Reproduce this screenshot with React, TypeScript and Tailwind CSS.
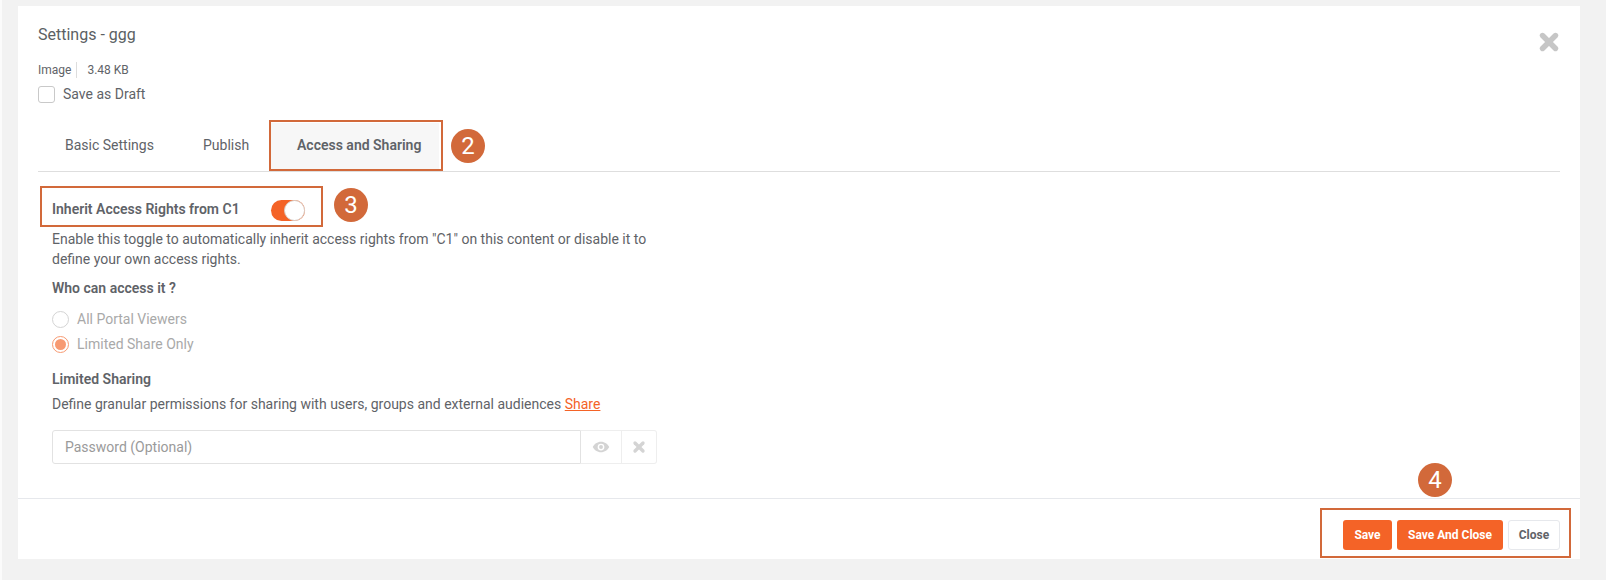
import { X } from "lucide-react";

const badgeClass =
  "absolute flex items-center justify-center size-[34px] rounded-full bg-[#d2693a] text-white text-[24px] leading-none";
const boxClass = "absolute border-2 border-[#d2693a] pointer-events-none";

const App = () => {
  return (
    <div className="relative h-[580px] w-[1606px] overflow-hidden border-l-2 border-l-[#fbfbfb] bg-[#f2f2f2] font-['Roboto',sans-serif] text-[14px] text-[#5f6368]">
      <div className="ml-4 pt-[6px]">
        <div className="flex h-[553px] w-[1562px] flex-col bg-white">
          {/* body */}
          <div className="relative flex-1 px-5 pt-[19px]">
            <div className="h-5 text-[16px] leading-5 text-[#5b5f63]">Settings - ggg</div>
            <div className="mt-[17px] flex h-4 items-center text-[12px] leading-4">
              <span className="border-r border-r-[#dddddd] pr-[5px]">Image</span>
              <span className="pl-[10px]">3.48 KB</span>
            </div>
            <div className="mt-[8px] flex h-[17px] items-center">
              <span className="size-[17px] rounded-[3px] border border-[#c9c9c9] bg-white" />
              <span className="ml-2 text-[14px]">Save as Draft</span>
            </div>

            {/* tabs */}
            <div className="mt-[20px] flex h-[49px] border-b border-b-[#dedede]">
              <div className="flex w-[142px] items-center pb-[4px] pl-[27px]">Basic Settings</div>
              <div className="flex w-[91px] items-center pb-[4px] pl-[23px]">Publish</div>
              <div className="flex w-[168px] items-center bg-[#f7f7f7] pb-[4px] pl-[26px] font-semibold">Access and Sharing</div>
            </div>

            <div className="pl-[14px]">
              <div className="mt-[27px] flex h-[22px] w-[253px] items-center justify-between font-semibold">
                <span className="pb-[2px]">Inherit Access Rights from C1</span>
                <span className="relative h-[21px] w-[34px] rounded-full bg-[#f46327]">
                  <span className="absolute right-0 top-0 size-[21px] rounded-full border border-[#d9cfc9] bg-white" />
                </span>
              </div>

              <p className="mt-[8px] w-[600px] leading-5">
                Enable this toggle to automatically inherit access rights from "C1" on this content or disable it to define your own access rights.
              </p>

              <div className="mt-[9px] leading-5 font-semibold">Who can access it ?</div>

              <div className="mt-[11px] flex h-5 items-center text-[#a9a9a9]">
                <span className="size-[17px] rounded-full border border-[#d4d4d4] bg-white" />
                <span className="ml-2">All Portal Viewers</span>
              </div>
              <div className="mt-[5px] flex h-5 items-center text-[#a9a9a9]">
                <span className="flex size-[17px] items-center justify-center rounded-full border border-[#f79a72] bg-white">
                  <span className="size-[11px] rounded-full bg-[#f79a72]" />
                </span>
                <span className="ml-2">Limited Share Only</span>
              </div>

              <div className="mt-[15px] leading-5 font-semibold">Limited Sharing</div>
              <div className="mt-[5px] leading-5">
                Define granular permissions for sharing with users, groups and external audiences{" "}
                <span className="text-[#f46327] underline">Share</span>
              </div>

              <div className="mt-4 flex h-[34px] w-[605px]">
                <div className="flex w-[529px] items-center rounded-l-[3px] border border-[#e2e2e2] pl-3 text-[#9a9a9a]">
                  Password (Optional)
                </div>
                <div className="flex w-[41px] items-center justify-center border-y border-r border-[#eeeeee]">
                  <svg viewBox="0 0 24 24" className="size-[18px]" fill="#d4d4d4">
                    <path
                      fillRule="evenodd"
                      d="M12 5C7 5 2.9 8.1 1 12c1.900 3.900 6 7 11 7s9.100-3.100 11-7c-1.900-3.900-6-7-11-7zm0 11.500a4.500 4.500 0 1 1 0-9 4.500 4.500 0 0 1 0 9z"
                    />
                    <circle cx="12" cy="12" r="2.600" />
                  </svg>
                </div>
                <div className="flex w-[35px] items-center justify-center rounded-r-[3px] border-y border-r border-[#eeeeee]">
                  <X size={16} strokeWidth={5} className="text-[#d4d4d4]" />
                </div>
              </div>
            </div>

            <X size={26} strokeWidth={5} className="absolute right-[18px] top-[23px] text-[#c6c6c6]" />
          </div>

          {/* footer */}
          <div className="flex h-[61px] items-center justify-end gap-[5px] border-t border-t-[#e6e8ec] pr-5 pt-[12px] text-[12px] font-bold">
            <button className="h-[30px] w-[49px] rounded-[3px] bg-[#f46327] text-white">Save</button>
            <button className="h-[30px] w-[106px] rounded-[3px] bg-[#f46327] text-white">Save And Close</button>
            <button className="h-[30px] w-[52px] rounded-[3px] border border-[#e6e8ec] bg-white text-[#5f6368]">Close</button>
          </div>
        </div>
      </div>

      {/* annotations */}
      <div className={`${boxClass} left-[267px] top-[120px] h-[51px] w-[174px]`} />
      <div className={`${badgeClass} left-[449px] top-[129px]`}>2</div>
      <div className={`${boxClass} left-[38px] top-[186px] h-[41px] w-[283px]`} />
      <div className={`${badgeClass} left-[332px] top-[188px]`}>3</div>
      <div className={`${badgeClass} left-[1416px] top-[463px]`}>4</div>
      <div className={`${boxClass} left-[1318px] top-[508px] h-[50px] w-[251px]`} />
    </div>
  );
};

export default App;
